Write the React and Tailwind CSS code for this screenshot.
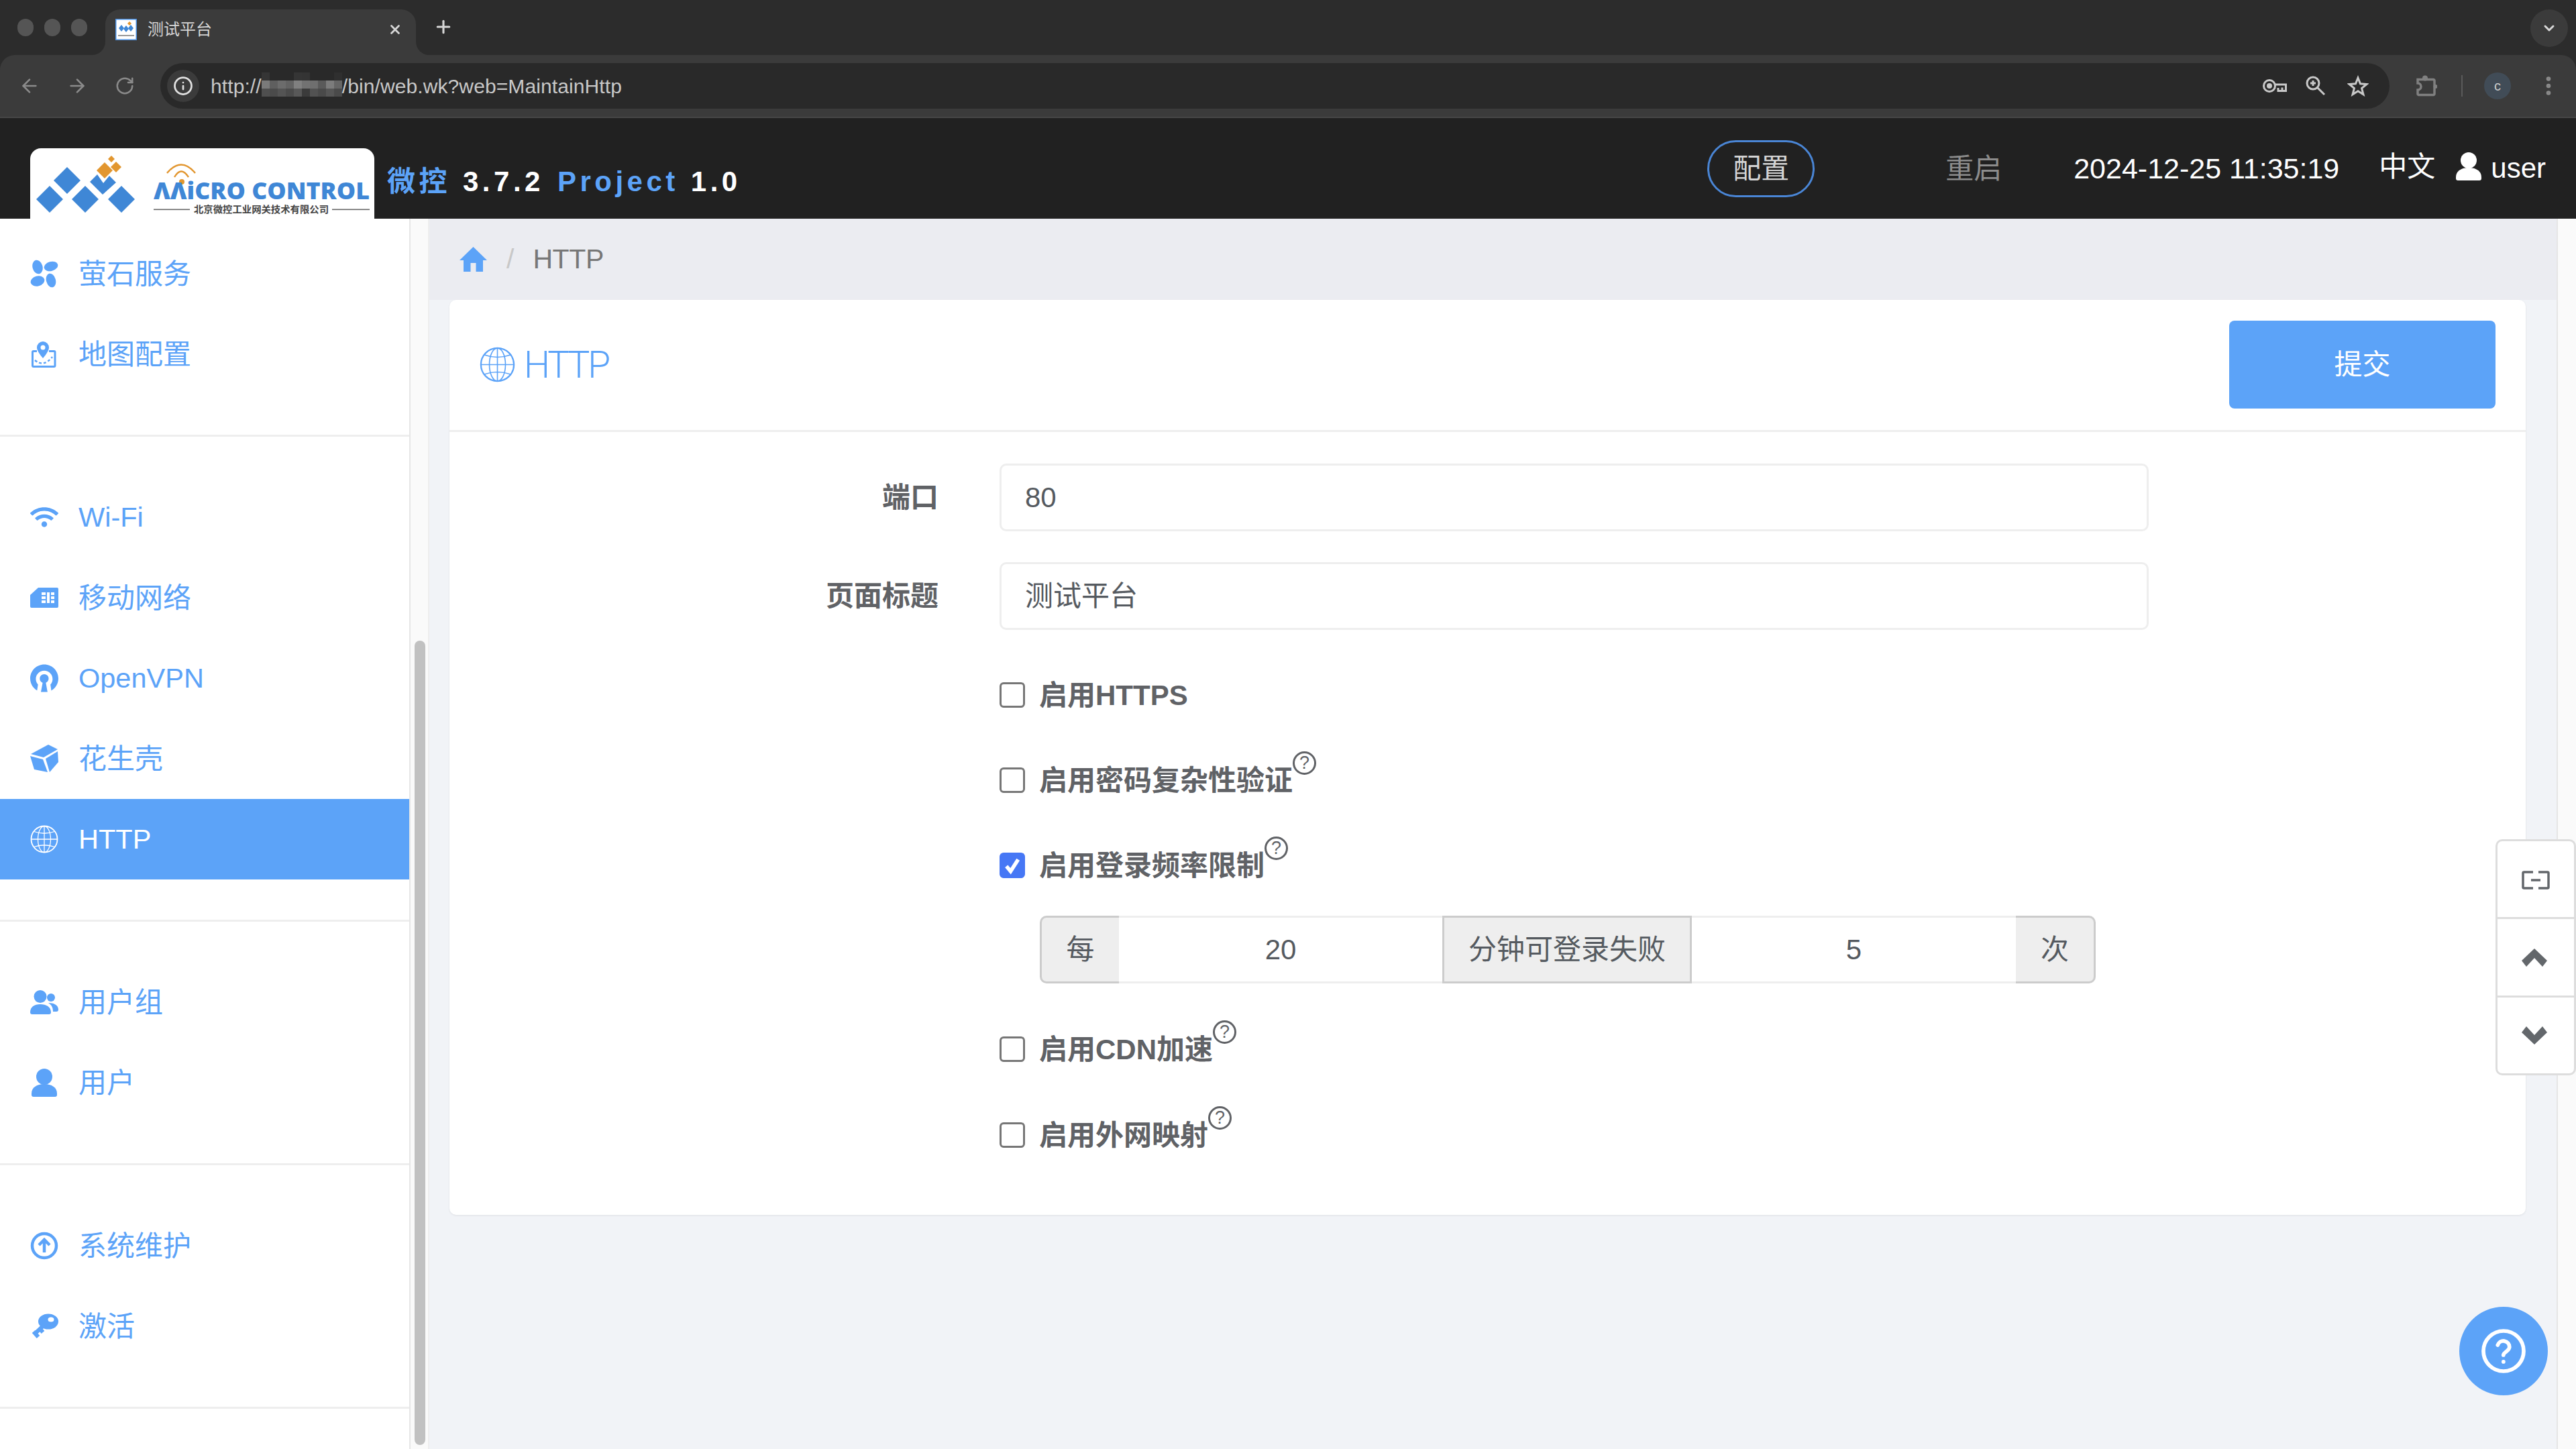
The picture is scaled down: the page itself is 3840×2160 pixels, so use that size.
import React from "react";
import { ArrowLeft, ArrowRight, RotateCw, Info, EllipsisVertical, ChevronDown, Plus, X } from "lucide-react";
import { FaWifi } from "react-icons/fa";
import { SiOpenvpn } from "react-icons/si";

function Logo() {
  return (
    <svg width="513" height="105" viewBox="0 0 513 105">
      <g fill="#3f87d6">
        <polygon points="55,28 75,48 55,68 35,48" />
        <polygon points="29,56 49,76 29,96 9,76" />
        <polygon points="82,56 102,76 82,96 62,76" />
        <polygon points="136,56 156,76 136,96 116,76" />
        <polygon points="89,50 100,39 109,52 118,41 128,51 108,69" />
      </g>
      <g fill="#e2962f">
        <polygon points="111,21 123,33 111,45 99,33" />
        <polygon points="128,20 136,28 128,36 120,28" />
        <polygon points="121,11 126,16 121,21 116,16" />
        <circle cx="226" cy="50" r="4" />
      </g>
      <g fill="none" stroke="#e2962f" strokeWidth="2.4">
        <path d="M204 37 Q225 12 246 37" />
        <path d="M215 43 Q225 26 236 43" />
      </g>
      <text x="184" y="76" fontFamily="Open Sans, sans-serif" fontWeight="800" fontSize="36" fill="#3f87d6" textLength="322" lengthAdjust="spacingAndGlyphs">ΛΛiCRO CONTROL</text>
      <g fill="#666">
        <rect x="184" y="90.5" width="54" height="1.6" />
        <rect x="450" y="90.5" width="56" height="1.6" />
      </g>
      <text x="244" y="95.5" fontFamily="Noto Sans CJK SC, sans-serif" fontWeight="700" fontSize="14" fill="#444" textLength="201" lengthAdjust="spacingAndGlyphs">北京微控工业网关技术有限公司</text>
    </svg>
  );
}

function Favicon() {
  return (
    <svg width="32" height="32" viewBox="0 0 32 32" className="shrink-0">
      <rect x="0.75" y="0.75" width="30.5" height="30.5" fill="#fff" stroke="#4a90e2" strokeWidth="1.5" />
      <g fill="#3f87d6">
        <polygon points="9,9 13,14 9,19 5,14" />
        <polygon points="16,10 20,15 16,20 12,15" />
        <polygon points="23,9 27,14 23,19 19,14" />
      </g>
      <polygon points="21,4 24,7 21,10 18,7" fill="#e2962f" />
      <rect x="4" y="24" width="24" height="2" fill="#999" />
    </svg>
  );
}

function Globe({ className }) {
  return (
    <svg viewBox="0 0 42 42" fill="none" stroke="currentColor" strokeWidth="1.3" className={className}>
      <circle cx="21" cy="21" r="19.5" strokeWidth="1.8" />
      <ellipse cx="21" cy="21" rx="9.5" ry="19.5" />
      <path d="M21 1.5V40.5M1.5 21H40.5M5.5 9.5Q21 15 36.5 9.5M5.5 32.5Q21 27 36.5 32.5" />
    </svg>
  );
}

const IconFluorite = () => (
  <svg viewBox="0 0 42 42" className="w-[42px] h-[42px]" fill="#5ca3f8">
    <ellipse cx="11" cy="11" rx="7.5" ry="10.5" transform="rotate(-15 11 11)" />
    <ellipse cx="31" cy="10" rx="10.5" ry="7" transform="rotate(-15 31 10)" />
    <ellipse cx="11" cy="32" rx="10.5" ry="7.5" transform="rotate(-15 11 32)" />
    <ellipse cx="31" cy="31" rx="7" ry="10.5" transform="rotate(-15 31 31)" />
  </svg>
);
const IconMap = () => (
  <svg viewBox="0 0 42 42" className="w-[42px] h-[42px]" fill="none" stroke="#5ca3f8" strokeWidth="3">
    <path d="M10 16.500H5a1.500 1.500 0 0 0-1.500 1.500V38A1.500 1.500 0 0 0 5 39.500H35.500A1.500 1.500 0 0 0 37 38V18a1.500 1.500 0 0 0-1.500-1.500H28" />
    <path d="M19 2a9 9 0 0 0-9 9c0 6 9 16 9 16s9-10 9-16a9 9 0 0 0-9-9z" fill="#5ca3f8" stroke="none" />
    <circle cx="19" cy="11" r="3.500" fill="#fff" stroke="none" />
    <path d="M7 30Q20 41 33 25" strokeWidth="2.500" strokeDasharray="4 3" />
  </svg>
);
const IconSim = () => (
  <svg viewBox="0 0 42 30" className="w-[42px] h-[30px]">
    <path d="M12 0H40a2 2 0 0 1 2 2V28a2 2 0 0 1-2 2H2a2 2 0 0 1-2-2V11z" fill="#5ca3f8" />
    <g fill="#fff">
      <rect x="17" y="7" width="6" height="4" /><rect x="17" y="13" width="6" height="4" /><rect x="17" y="19" width="6" height="4" />
      <rect x="25" y="7" width="4" height="16" />
      <rect x="31" y="7" width="5" height="4" /><rect x="31" y="13" width="5" height="4" /><rect x="31" y="19" width="5" height="4" />
    </g>
  </svg>
);
const IconCube = () => (
  <svg viewBox="0 0 42 42" className="w-[42px] h-[42px]" fill="#5ca3f8">
    <polygon points="1,14 27,0 41,7 20,19" />
    <polygon points="0,17 19,22 26,41 6,37" />
    <polygon points="23,21 41,10 42,26 29,41" />
  </svg>
);
const IconUpload = () => (
  <svg viewBox="0 0 42 42" className="w-[42px] h-[42px]" fill="none" stroke="#5ca3f8" strokeWidth="4.500">
    <circle cx="21" cy="21" r="18" />
    <path d="M21 31V13M13 20l8-8 8 8" />
  </svg>
);
const IconUsers = () => (
  <svg viewBox="0 0 42 37" className="w-[42px] h-[37px]" fill="#5ca3f8">
    <ellipse cx="15" cy="9.500" rx="9.500" ry="9.500" />
    <path d="M0 33c0-8 6-12 15-12s16 4 16 12a3 3 0 0 1-3 3H3a3 3 0 0 1-3-3z" />
    <circle cx="31" cy="11" r="6" />
    <path d="M27 19c8 0 15 3 15 10 0 2-1 3-3 3h-5c0-6-2-10-7-13z" />
  </svg>
);
const IconUser = ({ className, fill = "#5ca3f8" }) => (
  <svg viewBox="0 0 38 42" className={className} fill={fill}>
    <ellipse cx="19" cy="12" rx="12" ry="12" />
    <path d="M0 37c0-9 8-14 19-14s19 5 19 14v2a3 3 0 0 1-3 3H3a3 3 0 0 1-3-3z" />
  </svg>
);
const IconKey = () => (
  <svg viewBox="0 0 42 38" className="w-[42px] h-[38px]">
    <ellipse cx="27" cy="12" rx="15" ry="11.500" fill="#5ca3f8" />
    <ellipse cx="31" cy="9" rx="4.500" ry="3.500" fill="#fff" />
    <path d="M21 17L6 31M5 27l7 8M13 21l6 7" fill="none" stroke="#5ca3f8" strokeWidth="6" />
  </svg>
);

const MenuItem = ({ icon, label, active, latin }) => (
  <div className={`h-[120px] flex items-center pl-[45px] gap-[30px] ${latin ? "text-[41.5px]" : "text-[42px]"} ${active ? "bg-[#5ca3f8] text-white" : "text-[#5ca3f8]"}`}>
    <span className="w-[42px] h-[42px] flex items-center justify-center shrink-0">{icon}</span>
    <span>{label}</span>
  </div>
);

const iconCls = "w-[42px] h-[42px] text-[#5ca3f8]";
const Group = ({ children, first }) => (
  <div className={`${first ? "pt-[22px]" : "pt-[60px]"} pb-[60px] border-b-[3px] border-[#eeeeee]`}>{children}</div>
);

const HelpDot = () => (
  <span className="mb-[52px] w-[35px] h-[35px] rounded-full border-[3px] border-[#606266] flex items-center justify-center text-[27px] leading-none text-[#606266] font-normal">?</span>
);

const Check = ({ label, checked, help, className = "" }) => (
  <div className={`h-[80px] flex items-center text-[42px] font-bold text-[#606266] ${className}`}>
    {checked ? (
      <span className="w-[38px] h-[38px] rounded-[6px] bg-[#4677f5] flex items-center justify-center">
        <svg viewBox="0 0 24 24" className="w-[30px] h-[30px]" fill="none" stroke="#fff" strokeWidth="4.500"><path d="M5 13l5 6L19 5" /></svg>
      </span>
    ) : (
      <span className="w-[38px] h-[38px] rounded-[6px] border-[3px] border-[#767676] bg-white" />
    )}
    <span className="ml-[21px]">{label}</span>
    {help && <HelpDot />}
  </div>
);

const Field = ({ label, value, className = "" }) => (
  <div className={`flex items-center ${className}`}>
    <div className="w-[729px] text-right text-[42px] font-bold text-[#606266]">{label}</div>
    <div className="ml-[91px] w-[1713px] h-[101px] rounded-[10px] border-[3px] border-[#eeeeee] pl-[35px] flex items-center text-[42px] text-[#555a60]">{value}</div>
  </div>
);

const mosaic = [
  "bg-[#353535]", "bg-[#292929]", "bg-[#292929]", "bg-[#292929]", "bg-[#353535]", "bg-[#343434]", "bg-[#292929]", "bg-[#292929]", "bg-[#292929]", "bg-[#2f2f2f]",
  "bg-[#7a7a7a]", "bg-[#5f5f5f]", "bg-[#6c6c6c]", "bg-[#636363]", "bg-[#808080]", "bg-[#727272]", "bg-[#6f6f6f]", "bg-[#5a5a5a]", "bg-[#7c7c7c]", "bg-[#666666]",
  "bg-[#4f4f4f]", "bg-[#4b4b4b]", "bg-[#545454]", "bg-[#4b4b4b]", "bg-[#585858]", "bg-[#3b3b3b]", "bg-[#525252]", "bg-[#4a4a4a]", "bg-[#565656]", "bg-[#4a4a4a]",
];

export default function App() {
  return (
    <div className="relative w-[3840px] h-[2160px] overflow-hidden flex flex-col bg-[#f1f3f7] font-['Liberation_Sans','Noto_Sans_CJK_SC',sans-serif]">
      {/* browser chrome */}
      <div className="shrink-0 bg-[#2c2c2c]">
        <div className="h-[82px] flex items-end pl-[18px] pr-[12px]">
          <div className="flex items-center gap-[16px] h-[68px] w-[139px] pl-[8px] pb-[14px]">
            <span className="w-[24px] h-[26px] rounded-full bg-[#555555]" />
            <span className="w-[24px] h-[26px] rounded-full bg-[#555555]" />
            <span className="w-[24px] h-[26px] rounded-full bg-[#555555]" />
          </div>
          <div className="relative w-[463px] h-[68px] bg-[#3b3b3b] rounded-t-[22px] flex items-center pl-[15px] pr-[20px] pb-[8px] text-[#d6d6d6] text-[24px]">
            <Favicon />
            <span className="ml-[16px]">测试平台</span>
            <X className="ml-auto w-[22px] h-[22px]" strokeWidth={3} />
            <span className="absolute -left-[20px] bottom-0 w-[20px] h-[20px] bg-[#3b3b3b]"><span className="block w-full h-full rounded-br-[20px] bg-[#2c2c2c]" /></span>
            <span className="absolute -right-[20px] bottom-0 w-[20px] h-[20px] bg-[#3b3b3b]"><span className="block w-full h-full rounded-bl-[20px] bg-[#2c2c2c]" /></span>
          </div>
          <Plus className="ml-[26px] mb-[27px] w-[30px] h-[30px] text-[#d6d6d6]" strokeWidth={2.5} />
          <div className="ml-auto mb-[12px] w-[56px] h-[56px] rounded-full bg-[#3b3b3b] flex items-center justify-center">
            <ChevronDown className="w-[24px] h-[24px] text-[#d6d6d6]" strokeWidth={3} />
          </div>
        </div>
        <div className="h-[94px] bg-[#3b3b3b] rounded-t-[22px] border-b-[2px] border-[#474747] flex items-center">
          <ArrowLeft className="ml-[28px] w-[32px] h-[32px] text-[#8a8a8a]" strokeWidth={2} />
          <ArrowRight className="ml-[39px] w-[32px] h-[32px] text-[#8a8a8a]" strokeWidth={2} />
          <RotateCw className="ml-[40px] w-[30px] h-[30px] text-[#8a8a8a]" strokeWidth={2} />
          <div className="ml-[38px] w-[3323px] h-[68px] rounded-full bg-[#292929] flex items-center pl-[10px] text-[30px] tracking-[0.1px] text-[#c8c8c8]">
            <span className="w-[48px] h-[48px] rounded-full bg-[#3b3b3b] flex items-center justify-center">
              <Info className="w-[30px] h-[30px] text-[#e0e0e0]" strokeWidth={2.2} />
            </span>
            <span className="ml-[17px]">http://</span>
            <span className="w-[120px] h-[36px] mb-[4px] grid grid-cols-10 grid-rows-3">
              {mosaic.map((c, i) => <span key={i} className={c} />)}
            </span>
            <span>/bin/web.wk?web=MaintainHttp</span>
            <svg viewBox="0 0 36 20" className="ml-auto w-[36px] h-[20px]" fill="none" stroke="#c8c8c8" strokeWidth="3">
              <circle cx="10" cy="10" r="8.500" />
              <circle cx="10" cy="10" r="4" fill="#c8c8c8" stroke="none" />
              <path d="M18 8H34.500V17.500H23V13M29 12.500V17" />
            </svg>
            <svg viewBox="0 0 30 30" className="ml-[28px] w-[30px] h-[30px]" fill="none" stroke="#c8c8c8" strokeWidth="3">
              <circle cx="11" cy="11" r="9" />
              <path d="M17.500 17.500L28 28M11 7V15M7 11H15" />
            </svg>
            <svg viewBox="0 0 32 32" className="ml-[32px] mr-[31px] w-[32px] h-[32px]" fill="none" stroke="#c8c8c8" strokeWidth="3">
              <path d="M16 4L19.500 12.800L29 13.500L21.600 19.500L24 28.800L16 23.700L8 28.800L10.400 19.500L3 13.500L12.500 12.800Z" />
            </svg>
          </div>
          <svg viewBox="0 0 32 32" className="ml-[39px] w-[32px] h-[32px]" fill="none" stroke="#808080" strokeWidth="3.500">
            <path d="M3 6.500H26.500A1.500 1.500 0 0 1 28 8V28A1.500 1.500 0 0 1 26.500 29.500H4.500A1.500 1.500 0 0 1 3 28V22A5 5 0 0 0 3 12Z" />
            <circle cx="14" cy="4.500" r="4" fill="#808080" stroke="none" />
            <circle cx="29.500" cy="17" r="3" fill="#808080" stroke="none" />
          </svg>
          <span className="ml-[36px] w-[2px] h-[32px] bg-[#5a5a5a]" />
          <span className="ml-[32px] w-[40px] h-[40px] rounded-full bg-[#414c57] flex items-center justify-center text-[20px] text-[#c8c8c8]">c</span>
          <EllipsisVertical className="ml-[38px] w-[36px] h-[36px] text-[#8a8a8a]" strokeWidth={2.4} />
        </div>
      </div>
      {/* app header */}
      <div className="h-[150px] shrink-0 bg-[#212121] flex items-center pl-[45px] pr-[45px]">
        <div className="self-end w-[513px] h-[105px] bg-white rounded-t-[16px] overflow-hidden"><Logo /></div>
        <div className="self-end mb-[34px] ml-[19px] flex items-baseline text-[42px] font-bold tracking-[5.5px] leading-none whitespace-pre">
          <span className="text-[#5ca3f8]">微控</span>
          <span className="ml-[18px] text-white">3.7.2</span>
          <span className="ml-[20px] text-[#5ca3f8]">Project</span>
          <span className="ml-[18px] text-white">1.0</span>
        </div>
        <div className="ml-auto w-[160px] h-[85px] rounded-full border-[3px] border-[#4a86d6] flex items-center justify-center text-[42px] text-[#d4d4d4]">配置</div>
        <div className="ml-[195px] text-[42px] text-[#8c8c8c]">重启</div>
        <div className="ml-[107px] text-[43px] text-white">2024-12-25 11:35:19</div>
        <div className="ml-[59px] text-[42px] text-white mb-[6px]">中文</div>
        <IconUser className="ml-[31px] w-[38px] h-[42px] mb-[6px]" fill="#ffffff" />
        <div className="ml-[14px] text-[42px] text-white mb-[2px]">user</div>
      </div>
      {/* body */}
      <div className="flex-1 flex min-h-0">
        <div className="w-[612px] shrink-0 bg-white border-r-[2px] border-[#e6e6e6] overflow-hidden">
          <Group first>
            <MenuItem icon={<IconFluorite />} label="萤石服务" />
            <MenuItem icon={<IconMap />} label="地图配置" />
          </Group>
          <Group>
            <MenuItem latin icon={<FaWifi className={iconCls} />} label="Wi-Fi" />
            <MenuItem icon={<IconSim />} label="移动网络" />
            <MenuItem latin icon={<SiOpenvpn className={iconCls} />} label="OpenVPN" />
            <MenuItem icon={<IconCube />} label="花生壳" />
            <MenuItem latin active icon={<Globe className="w-[42px] h-[42px] text-white" />} label="HTTP" />
          </Group>
          <Group>
            <MenuItem icon={<IconUsers />} label="用户组" />
            <MenuItem icon={<IconUser className="w-[38px] h-[42px]" />} label="用户" />
          </Group>
          <Group>
            <MenuItem icon={<IconUpload />} label="系统维护" />
            <MenuItem icon={<IconKey />} label="激活" />
          </Group>
        </div>
        <div className="w-[28px] shrink-0 bg-[#fafafa] border-r-[2px] border-[#eeeeee] pl-[6px] pt-[629px] pb-[6px]">
          <div className="w-[16px] h-full rounded-full bg-[#c1c1c1]" />
        </div>
        <div className="flex-1 min-w-0 flex flex-col">
          <div className="h-[121px] shrink-0 bg-[#ebecf1] pl-[45px] flex items-center text-[41px] text-[#777777]">
            <svg viewBox="0 0 41 37" className="w-[41px] h-[37px]" fill="#5ca3f8"><path d="M20.500 0L41 20H35V37H24.500V24H16.500V37H6V20H0z" /></svg>
            <span className="ml-[29px] text-[#c8c8c8]">/</span>
            <span className="ml-[28px] tracking-[-0.4px]">HTTP</span>
          </div>
          <div className="ml-[30px] mr-[46px] h-[1364px] shrink-0 bg-white rounded-[10px] shadow-[0_1px_3px_rgba(0,0,0,0.08)]">
            <div className="h-[197px] border-b-[3px] border-[#eeeeee] flex items-center pl-[45px] pr-[45px]">
              <Globe className="w-[53px] h-[53px] text-[#5ca3f8] mt-[-1px]" />
              <span className="ml-[13px] text-[55px] font-light font-['Roboto'] text-[#5ca3f8] tracking-[-3px]">HTTP</span>
              <div className="ml-auto mb-[1px] w-[397px] h-[131px] rounded-[8px] bg-[#5ca3f8] flex items-center justify-center text-white text-[42px]">提交</div>
            </div>
            <div className="pt-[47px]">
              <Field label="端口" value="80" />
              <Field label="页面标题" value="测试平台" className="mt-[46px]" />
              <div className="ml-[820px]">
                <Check label="启用HTTPS" className="mt-[57px]" />
                <Check label="启用密码复杂性验证" help className="mt-[47px]" />
                <Check label="启用登录频率限制" checked help className="mt-[47px]" />
                <div className="mt-[35px] ml-[60px] w-[1574px] h-[101px] flex text-[42px] text-[#555a60]">
                  <div className="w-[118px] bg-[#eeeeee] border-[3px] border-r-0 border-[#cccccc] rounded-l-[10px] flex items-center justify-center">每</div>
                  <div className="w-[482px] border-y-[3px] border-[#eeeeee] flex items-center justify-center">20</div>
                  <div className="w-[372px] bg-[#eeeeee] border-[3px] border-[#cccccc] flex items-center justify-center">分钟可登录失败</div>
                  <div className="w-[483px] border-y-[3px] border-[#eeeeee] flex items-center justify-center">5</div>
                  <div className="w-[119px] bg-[#eeeeee] border-[3px] border-l-0 border-[#cccccc] rounded-r-[10px] flex items-center justify-center">次</div>
                </div>
                <Check label="启用CDN加速" help className="mt-[58px]" />
                <Check label="启用外网映射" help className="mt-[48px]" />
              </div>
            </div>
          </div>
        </div>
        <div className="w-[29px] shrink-0 bg-[#fafafa] border-l-[2px] border-[#e6e6e6]" />
      </div>
      {/* floating */}
      <div className="absolute left-[3720px] top-[1251px] w-[120px] h-[352px] bg-white border-[3px] border-[#dddddd] rounded-[10px] flex flex-col text-[#63676b]">
        <div className="h-[116px] pt-[2px] flex items-center justify-center border-b-[3px] border-[#dddddd]">
          <svg viewBox="0 0 42 28" className="w-[42px] h-[28px]" fill="none" stroke="currentColor" strokeWidth="3.500">
            <path d="M17 2H3.500a1.500 1.500 0 0 0-1.500 1.500V24.500A1.500 1.500 0 0 0 3.500 26H17M25 2H38.500a1.500 1.500 0 0 1 1.500 1.500V24.500a1.500 1.500 0 0 1-1.500 1.500H25M14 14H28" />
          </svg>
        </div>
        <div className="h-[117px] flex items-center justify-center border-b-[3px] border-[#dddddd]">
          <svg viewBox="0 0 38 27" className="w-[38px] h-[27px] -ml-[4px]" fill="currentColor"><polygon points="19,0 38,18 31,27 19,14 7,27 0,18" /></svg>
        </div>
        <div className="flex-1 flex items-center justify-center">
          <svg viewBox="0 0 38 27" className="w-[38px] h-[27px] -ml-[4px]" fill="currentColor"><polygon points="19,27 38,9 31,0 19,13 7,0 0,9" /></svg>
        </div>
      </div>
      <div className="absolute left-[3666px] top-[1948px] w-[132px] h-[132px] rounded-full bg-[#5ca3f8] flex items-center justify-center">
        <svg viewBox="0 0 24 24" className="w-[72px] h-[72px]" fill="none" stroke="#fff" strokeWidth="1.900" strokeLinecap="round">
          <circle cx="12" cy="12" r="10" />
          <path d="M9.090 9a3 3 0 0 1 5.830 1c0 2-3 2.500-3 4" />
          <path d="M11.950 17.300h.01" />
        </svg>
      </div>
    </div>
  );
}
